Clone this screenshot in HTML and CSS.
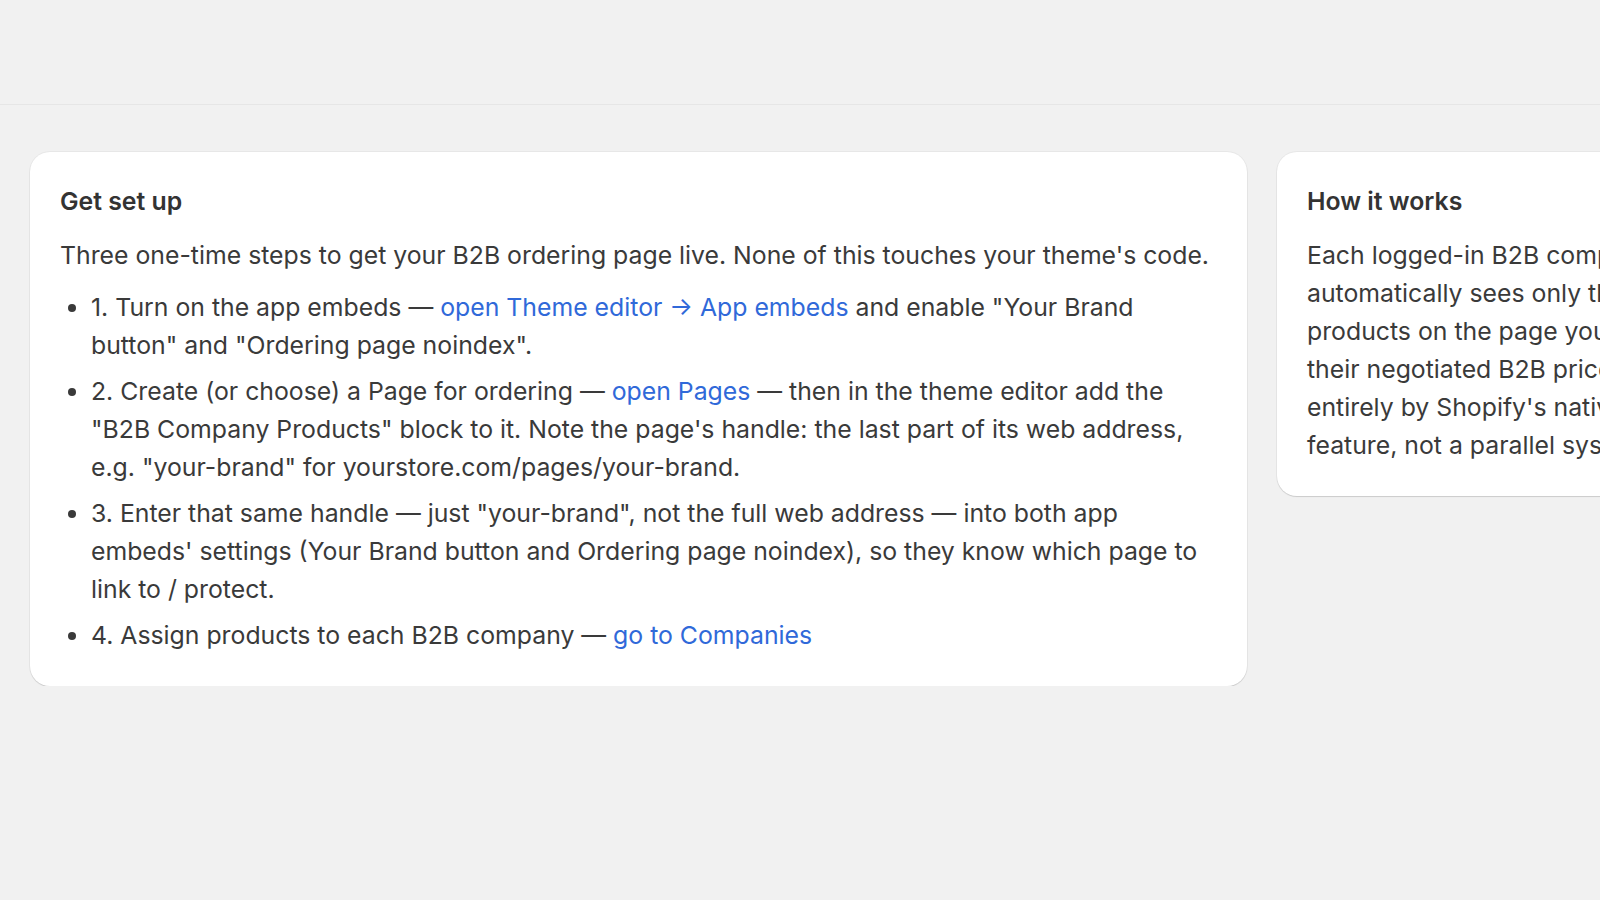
FILE: index.html
```html
<!DOCTYPE html>
<html lang="en">

<head>
  <meta charset="UTF-8">
  <meta name="viewport" content="width=device-width, initial-scale=1.0">
  <title>Setup</title>
  <link rel="stylesheet" href="styles.css">
</head>

<body>
  <header class="top-bar"></header>

  <main class="layout">
    <section class="card card-main">
      <h2 class="card-title">Get set up</h2>
      <p class="card-text">Three one-time steps to get your B2B ordering page live. None of this touches your theme's code.</p>
      <ul class="steps">
        <li>1. Turn on the app embeds — <a href="#">open Theme editor → App embeds</a> and enable "Your Brand button" and "Ordering page noindex".</li>
        <li>2. Create (or choose) a Page for ordering — <a href="#">open Pages</a> — then in the theme editor add the "B2B Company Products" block to it. Note the page's handle: the last part of its web address, e.g. "your-brand" for yourstore.com/pages/your-brand.</li>
        <li>3. Enter that same handle — just "your-brand", not the full web address — into both app embeds' settings (Your Brand button and Ordering page noindex), so they know which page to link to / protect.</li>
        <li>4. Assign products to each B2B company — <a href="#">go to Companies</a></li>
      </ul>
    </section>

    <section class="card card-side">
      <h2 class="card-title">How it works</h2>
      <p class="card-text">Each logged-in B2B company automatically sees only their assigned products on the page you create, at their negotiated B2B prices — handled entirely by Shopify's native B2B feature, not a parallel system.</p>
    </section>
  </main>
</body>

</html>
```

FILE: styles.css
```css
body {
  margin: 0;
  font-family: 'Inter', 'Noto Sans', sans-serif;
  background-color: #f1f1f1;
  color: #3a3a3a;
  overflow: hidden;
}

.top-bar {
  height: 105px;
  border-bottom: 1px solid #e6e6e6;
  box-sizing: border-box;
}

.layout {
  display: flex;
  align-items: flex-start;
  gap: 30px;
  padding: 47px 0 0 30px;
  overflow: hidden;
}

.card {
  background-color: white;
  border-radius: 20px;
  padding: 30px 30px 32px;
  box-shadow: 0 1px 1px rgba(0, 0, 0, 0.12), 0 0 0 1px rgba(0, 0, 0, 0.04);
  flex-shrink: 0;
  box-sizing: border-box;
  font-size: 24.8px;
  line-height: 38px;
}

.card-main {
  width: 1217px;
}

.card-side {
  width: 518px;
}

.card-title {
  margin: 0 0 16px;
  font-size: 24.8px;
  font-weight: 600;
  line-height: 38px;
  color: #333333;
}

.card-text {
  margin: 0;
}

.steps {
  margin: 14px 0 0;
  padding-left: 31px;
}

.steps li {
  margin-top: 8px;
}

.steps li:first-child {
  margin-top: 0;
}

.steps a {
  color: #3069d9;
  text-decoration: none;
}
```
